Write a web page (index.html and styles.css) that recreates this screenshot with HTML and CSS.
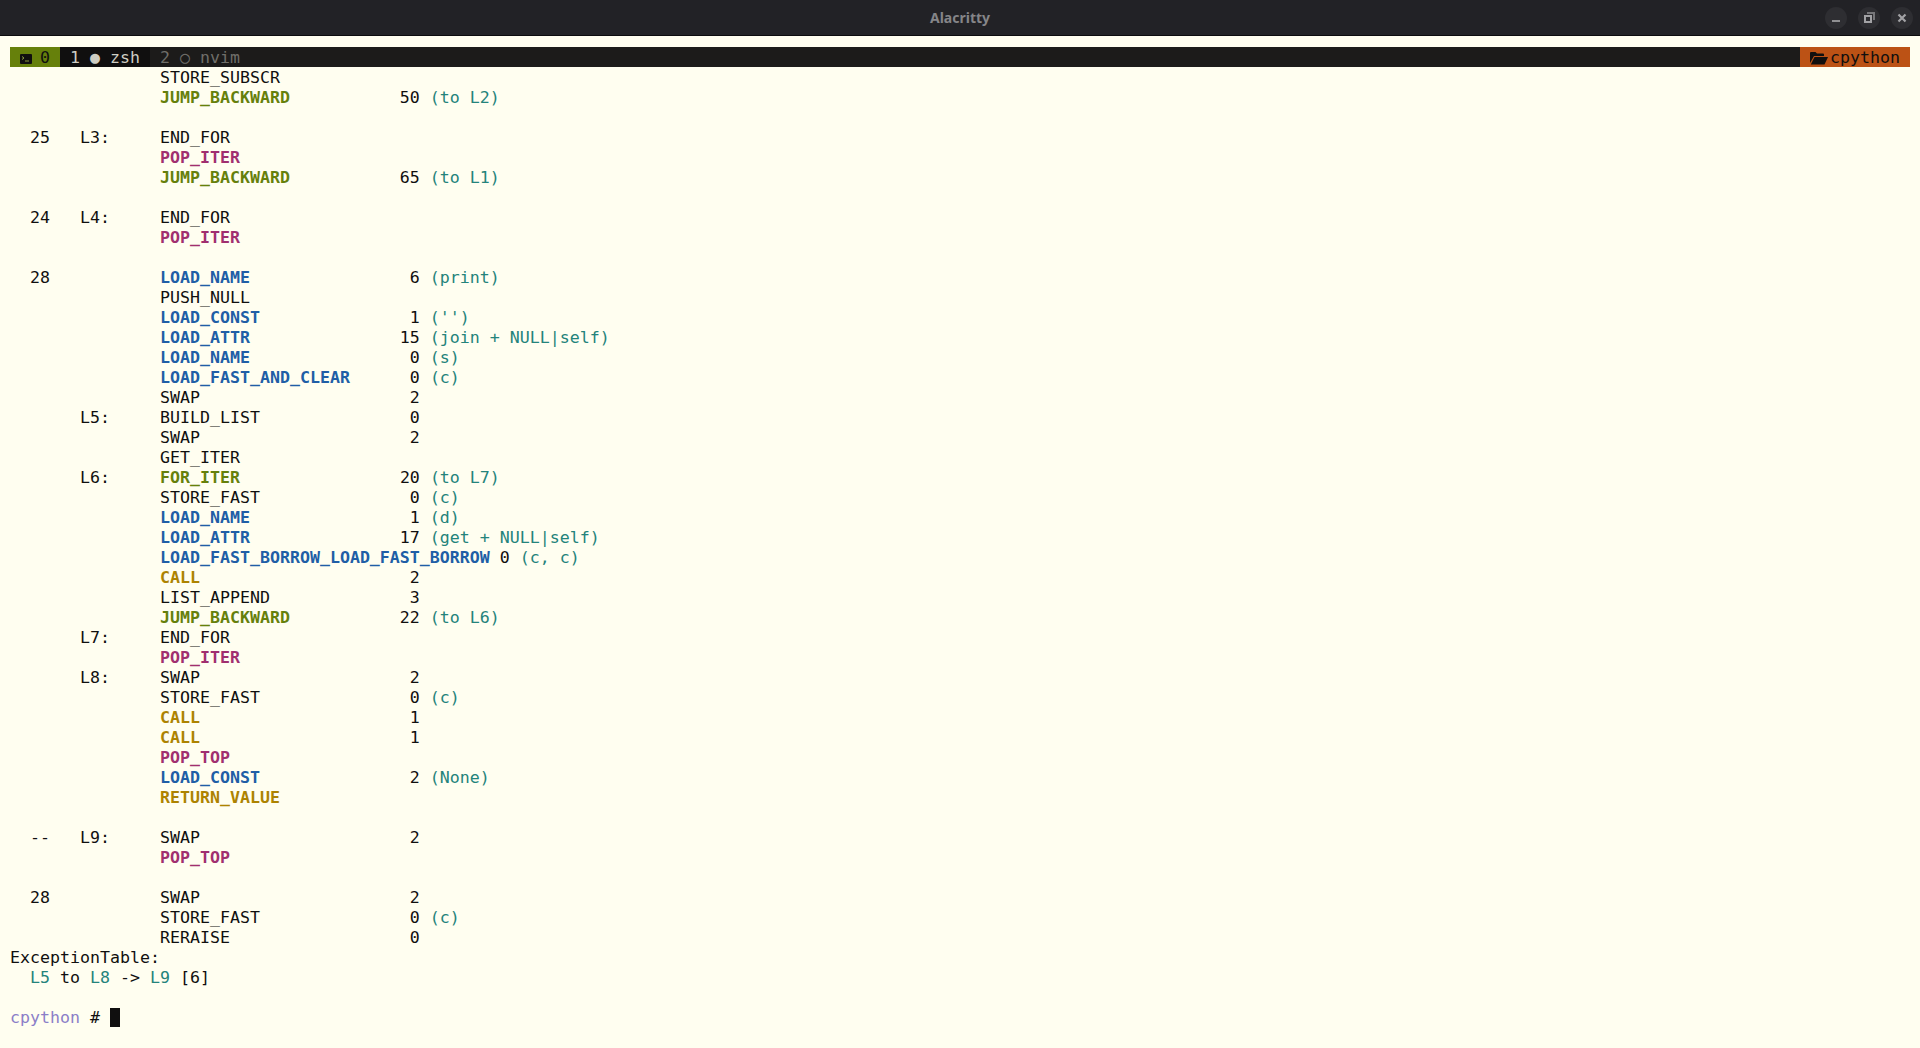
FILE: index.html
```html
<!DOCTYPE html>
<html lang="en">
<head>
    <meta charset="UTF-8">
    <title>Alacritty</title>
    <link rel="stylesheet" href="styles.css">
</head>
<body>

<div class="titlebar">
    <span class="title">Alacritty</span>
    <div class="win-buttons">
        <span class="win-btn"><svg width="22" height="22" viewBox="0 0 22 22"><rect x="7" y="13" width="8" height="2" fill="#8f8f92"/></svg></span>
        <span class="win-btn"><svg width="22" height="22" viewBox="0 0 22 22"><path d="M9 5h8v8h-2V7H9z" fill="#77777a"/><path d="M6 8h8v8H6zM8 10v4h4v-4z" fill="#a2a2a5" fill-rule="evenodd"/></svg></span>
        <span class="win-btn"><svg width="22" height="22" viewBox="0 0 22 22"><path d="M7.5 7.5l7 7M14.5 7.5l-7 7" stroke="#a2a2a5" stroke-width="2.2" fill="none"/></svg></span>
    </div>
</div>

<div class="terminal">
    <div class="tmux-bar">
        <span class="tmux-session"><svg class="term-icon" width="12" height="10" viewBox="0 0 12 10"><path d="M1 0h10a1 1 0 0 1 1 1v8a1 1 0 0 1-1 1H1a1 1 0 0 1-1-1V1a1 1 0 0 1 1-1z" fill="#100f0f"/><path d="M2 2.500l2 1.500-2 1.500" stroke="#8a9a40" fill="none"/><path d="M5 7h4" stroke="#8a9a40"/></svg>0</span>
        <span class="tmux-win-active"> 1 ● zsh </span>
        <span class="tmux-win"> 2 ○ nvim</span>
        <span class="tmux-spacer"></span>
        <span class="tmux-dir"><svg class="folder-icon" width="18" height="14" viewBox="0 0 18 14"><path d="M0 2a1 1 0 0 1 1-1h4.500l1.500 1.500h6a1 1 0 0 1 1 1V5H4L0 12z" fill="#100f0f"/><path d="M4.500 6H18l-3.500 7.500H.8z" fill="#100f0f"/></svg>cpython</span>
    </div>
    <div class="output">
        <div class="line">               STORE_SUBSCR</div>
        <div class="line">               <span class="g">JUMP_BACKWARD</span>           50 <span class="t">(to L2)</span></div>
        <div class="line"></div>
        <div class="line">  25   L3:     END_FOR</div>
        <div class="line">               <span class="m">POP_ITER</span></div>
        <div class="line">               <span class="g">JUMP_BACKWARD</span>           65 <span class="t">(to L1)</span></div>
        <div class="line"></div>
        <div class="line">  24   L4:     END_FOR</div>
        <div class="line">               <span class="m">POP_ITER</span></div>
        <div class="line"></div>
        <div class="line">  28           <span class="b">LOAD_NAME</span>                6 <span class="t">(print)</span></div>
        <div class="line">               PUSH_NULL</div>
        <div class="line">               <span class="b">LOAD_CONST</span>               1 <span class="t">('')</span></div>
        <div class="line">               <span class="b">LOAD_ATTR</span>               15 <span class="t">(join + NULL|self)</span></div>
        <div class="line">               <span class="b">LOAD_NAME</span>                0 <span class="t">(s)</span></div>
        <div class="line">               <span class="b">LOAD_FAST_AND_CLEAR</span>      0 <span class="t">(c)</span></div>
        <div class="line">               SWAP                     2</div>
        <div class="line">       L5:     BUILD_LIST               0</div>
        <div class="line">               SWAP                     2</div>
        <div class="line">               GET_ITER</div>
        <div class="line">       L6:     <span class="g">FOR_ITER</span>                20 <span class="t">(to L7)</span></div>
        <div class="line">               STORE_FAST               0 <span class="t">(c)</span></div>
        <div class="line">               <span class="b">LOAD_NAME</span>                1 <span class="t">(d)</span></div>
        <div class="line">               <span class="b">LOAD_ATTR</span>               17 <span class="t">(get + NULL|self)</span></div>
        <div class="line">               <span class="b">LOAD_FAST_BORROW_LOAD_FAST_BORROW</span> 0 <span class="t">(c, c)</span></div>
        <div class="line">               <span class="y">CALL</span>                     2</div>
        <div class="line">               LIST_APPEND              3</div>
        <div class="line">               <span class="g">JUMP_BACKWARD</span>           22 <span class="t">(to L6)</span></div>
        <div class="line">       L7:     END_FOR</div>
        <div class="line">               <span class="m">POP_ITER</span></div>
        <div class="line">       L8:     SWAP                     2</div>
        <div class="line">               STORE_FAST               0 <span class="t">(c)</span></div>
        <div class="line">               <span class="y">CALL</span>                     1</div>
        <div class="line">               <span class="y">CALL</span>                     1</div>
        <div class="line">               <span class="m">POP_TOP</span></div>
        <div class="line">               <span class="b">LOAD_CONST</span>               2 <span class="t">(None)</span></div>
        <div class="line">               <span class="y">RETURN_VALUE</span></div>
        <div class="line"></div>
        <div class="line">  --   L9:     SWAP                     2</div>
        <div class="line">               <span class="m">POP_TOP</span></div>
        <div class="line"></div>
        <div class="line">  28           SWAP                     2</div>
        <div class="line">               STORE_FAST               0 <span class="t">(c)</span></div>
        <div class="line">               RERAISE                  0</div>
        <div class="line">ExceptionTable:</div>
        <div class="line">  <span class="l">L5</span> to <span class="l">L8</span> -&gt; <span class="l">L9</span> [6]</div>
        <div class="line"></div>
        <div class="line"><span class="prompt">cpython</span> # <span class="cursor"> </span></div>
    </div>
</div>

</body>
</html>
```

FILE: styles.css
```css
html, body {
    margin: 0;
    height: 100%;
}
body {
    background-color: #fffef0;
    color: #100f0f;
    overflow: hidden;
}
.titlebar {
    height: 35px;
    background-color: #222226;
    border-bottom: 1px solid #0c0c0e;
    display: flex;
    align-items: center;
    justify-content: center;
    position: relative;
}
.title {
    font-family: "Noto Sans", sans-serif;
    font-size: 14px;
    font-weight: 700;
    color: #858588;
}
.win-buttons {
    position: absolute;
    right: 7px;
    top: 7px;
    display: flex;
    gap: 11px;
}
.win-btn {
    width: 22px;
    height: 22px;
    border-radius: 50%;
    background-color: #2e2e32;
    display: block;
}
.win-btn svg {
    display: block;
}
.terminal {
    padding: 11px 10px 0;
    font-family: "DejaVu Sans Mono", monospace;
    font-size: 16.6px;
    letter-spacing: 0.006px;
    line-height: 20px;
}
.tmux-bar {
    display: flex;
    height: 20px;
    line-height: 21px;
    background-color: #1c1b1a;
    white-space: pre;
}
.tmux-session {
    background-color: #66800b;
    color: #100f0f;
    width: 50px;
}
.term-icon {
    margin-left: 10px;
    margin-right: 8px;
    vertical-align: -1px;
}
.tmux-win-active {
    background-color: #100f0f;
    color: #cecdc3;
    width: 90px;
}
.tmux-win {
    color: #6f6e69;
}
.tmux-spacer {
    flex: 1;
}
.tmux-dir {
    background-color: #bc5215;
    color: #100f0f;
    width: 110px;
    padding-left: 10px;
    box-sizing: border-box;
}
.folder-icon {
    margin-right: 2px;
    vertical-align: -2px;
}
.output {
    padding-top: 1px;
}
.line {
    height: 20px;
    white-space: pre;
}
.g, .m, .b, .y {
    font-weight: bold;
}
.g { color: #66800b; }
.m { color: #a02f6f; }
.b { color: #205ea6; }
.y { color: #ad8301; }
.t, .l { color: #24837b; }
.prompt { color: #8b7ec8; }
.cursor {
    background-color: #100f0f;
}
```
